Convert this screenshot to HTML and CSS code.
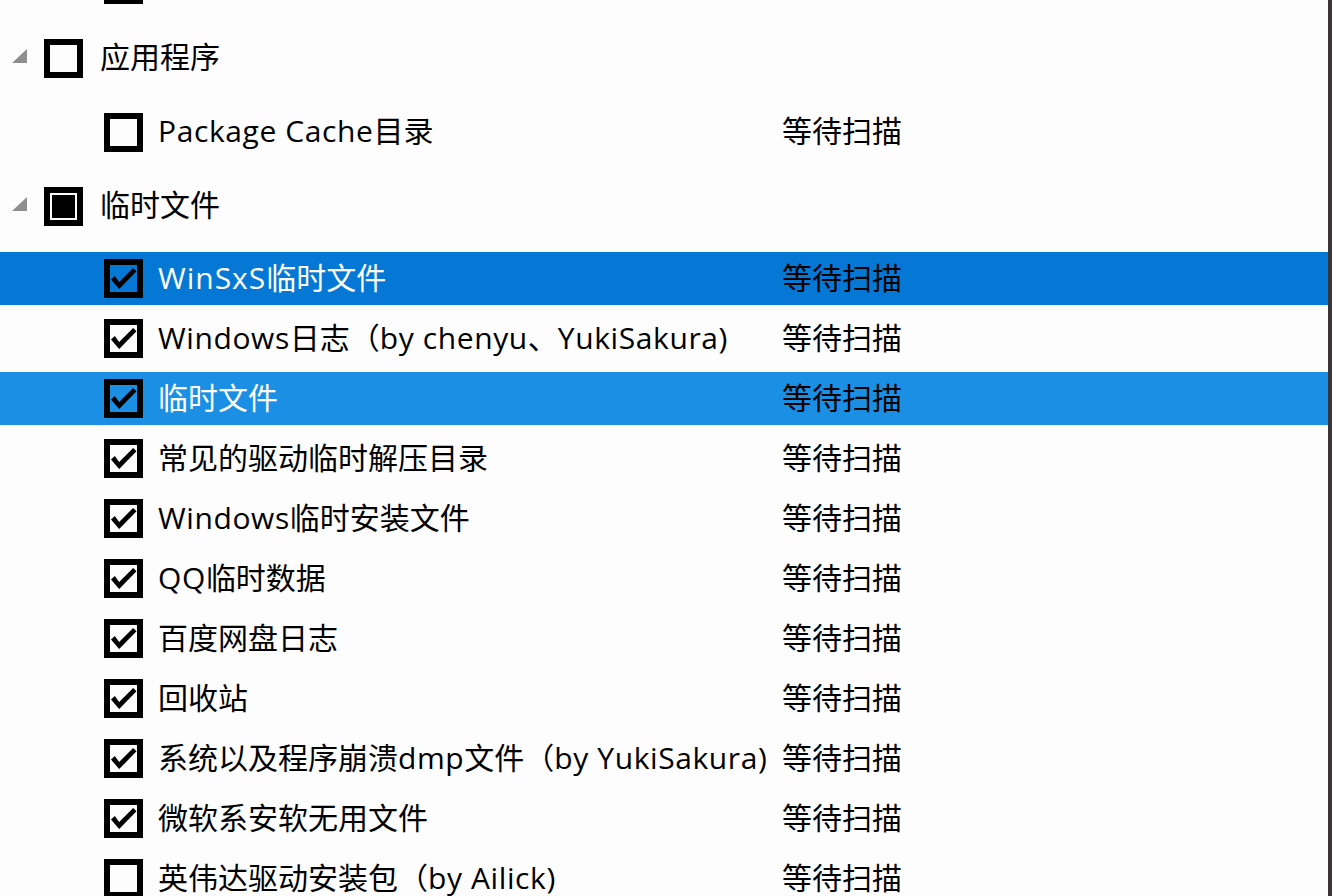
FILE: index.html
```html
<!DOCTYPE html>
<html>
<head>
    <title>清理项目</title>
    <link rel="stylesheet" href="styles.css">
</head>
<body>
    <div class="window">
        <div class="tree">
            <!-- 上一组的最后一项，只露出勾选框底边 -->
            <div class="row tall child">
                <span class="box checked"></span>
            </div>

            <div class="row tall group">
                <span class="toggle"><svg width="16" height="15" viewBox="0 0 16 15"><path d="M15 0 L15 14 L0 14 Z" fill="#8e8e8e"/></svg></span>
                <span class="box"></span>
                <span class="label">应用程序</span>
            </div>
            <div class="row tall child">
                <span class="box"></span>
                <span class="name"><span class="en">Package Cache</span>目录</span>
                <span class="status">等待扫描</span>
            </div>

            <div class="row tall group">
                <span class="toggle"><svg width="16" height="15" viewBox="0 0 16 15"><path d="M15 0 L15 14 L0 14 Z" fill="#8e8e8e"/></svg></span>
                <span class="box partial"><i></i></span>
                <span class="label">临时文件</span>
            </div>

            <div class="items">
                <div class="row child selected">
                    <span class="box checked"><svg viewBox="0 0 28 28"><path d="M1 15 L5 11.5 L9.5 17.5 L24 3 L27.5 6.5 L9.5 25 Z"/></svg></span>
                    <span class="name"><span class="en wide">WinSxS</span>临时文件</span>
                    <span class="status">等待扫描</span>
                </div>
                <div class="row child">
                    <span class="box checked"><svg viewBox="0 0 28 28"><path d="M1 15 L5 11.5 L9.5 17.5 L24 3 L27.5 6.5 L9.5 25 Z"/></svg></span>
                    <span class="name"><span class="en">Windows</span>日志（<span class="en">by chenyu</span>、<span class="en">YukiSakura)</span></span>
                    <span class="status">等待扫描</span>
                </div>
                <div class="row child hover">
                    <span class="box checked"><svg viewBox="0 0 28 28"><path d="M1 15 L5 11.5 L9.5 17.5 L24 3 L27.5 6.5 L9.5 25 Z"/></svg></span>
                    <span class="name">临时文件</span>
                    <span class="status">等待扫描</span>
                </div>
                <div class="row child">
                    <span class="box checked"><svg viewBox="0 0 28 28"><path d="M1 15 L5 11.5 L9.5 17.5 L24 3 L27.5 6.5 L9.5 25 Z"/></svg></span>
                    <span class="name">常见的驱动临时解压目录</span>
                    <span class="status">等待扫描</span>
                </div>
                <div class="row child">
                    <span class="box checked"><svg viewBox="0 0 28 28"><path d="M1 15 L5 11.5 L9.5 17.5 L24 3 L27.5 6.5 L9.5 25 Z"/></svg></span>
                    <span class="name"><span class="en">Windows</span>临时安装文件</span>
                    <span class="status">等待扫描</span>
                </div>
                <div class="row child">
                    <span class="box checked"><svg viewBox="0 0 28 28"><path d="M1 15 L5 11.5 L9.5 17.5 L24 3 L27.5 6.5 L9.5 25 Z"/></svg></span>
                    <span class="name"><span class="en">QQ</span>临时数据</span>
                    <span class="status">等待扫描</span>
                </div>
                <div class="row child">
                    <span class="box checked"><svg viewBox="0 0 28 28"><path d="M1 15 L5 11.5 L9.5 17.5 L24 3 L27.5 6.5 L9.5 25 Z"/></svg></span>
                    <span class="name">百度网盘日志</span>
                    <span class="status">等待扫描</span>
                </div>
                <div class="row child">
                    <span class="box checked"><svg viewBox="0 0 28 28"><path d="M1 15 L5 11.5 L9.5 17.5 L24 3 L27.5 6.5 L9.5 25 Z"/></svg></span>
                    <span class="name">回收站</span>
                    <span class="status">等待扫描</span>
                </div>
                <div class="row child">
                    <span class="box checked"><svg viewBox="0 0 28 28"><path d="M1 15 L5 11.5 L9.5 17.5 L24 3 L27.5 6.5 L9.5 25 Z"/></svg></span>
                    <span class="name">系统以及程序崩溃<span class="en">dmp</span>文件（<span class="en">by YukiSakura)</span></span>
                    <span class="status">等待扫描</span>
                </div>
                <div class="row child">
                    <span class="box checked"><svg viewBox="0 0 28 28"><path d="M1 15 L5 11.5 L9.5 17.5 L24 3 L27.5 6.5 L9.5 25 Z"/></svg></span>
                    <span class="name">微软系安软无用文件</span>
                    <span class="status">等待扫描</span>
                </div>
                <div class="row child">
                    <span class="box"></span>
                    <span class="name">英伟达驱动安装包（<span class="en">by Ailick)</span></span>
                    <span class="status">等待扫描</span>
                </div>
            </div>
        </div>
    </div>
</body>
</html>
```

FILE: styles.css
```css
html, body { margin: 0; height: 100%; }
body { background: #fdfdfe; color: #000; font-family: "Open Sans", "Noto Sans CJK SC", "Microsoft YaHei", sans-serif; overflow: hidden; }
.window { height: 896px; border-right: 4px solid #3a3537; box-sizing: border-box; overflow: hidden; }
.tree { margin-top: -53px; }
.row { display: flex; align-items: center; font-size: 30px; line-height: 1; }
.row.tall { height: 74px; }
.items { margin-top: 9px; }
.items .row { height: 53px; margin-bottom: 7px; }
.child { padding-left: 104px; }
.toggle { width: 44px; display: flex; align-items: center; }
.toggle svg { margin: -3px 0 0 12px; }
.box { width: 39px; height: 39px; border: 6px solid #000; box-sizing: border-box; display: flex; align-items: center; justify-content: center; flex: none; }
.box svg { width: 27px; height: 27px; fill: #000; }
.box.partial i { width: 23px; height: 23px; background: #000; }
.label, .name, .status { padding-bottom: 2px; white-space: nowrap; }
.label { margin-left: 17px; }
.name { width: 624px; margin-left: 15px; }
.en { letter-spacing: 0.6px; }
.en.wide { letter-spacing: 1px; }
.selected { background: #0478d4; }
.hover { background: #1a8fe3; }
.selected .name, .hover .name { color: #fff; }
```
